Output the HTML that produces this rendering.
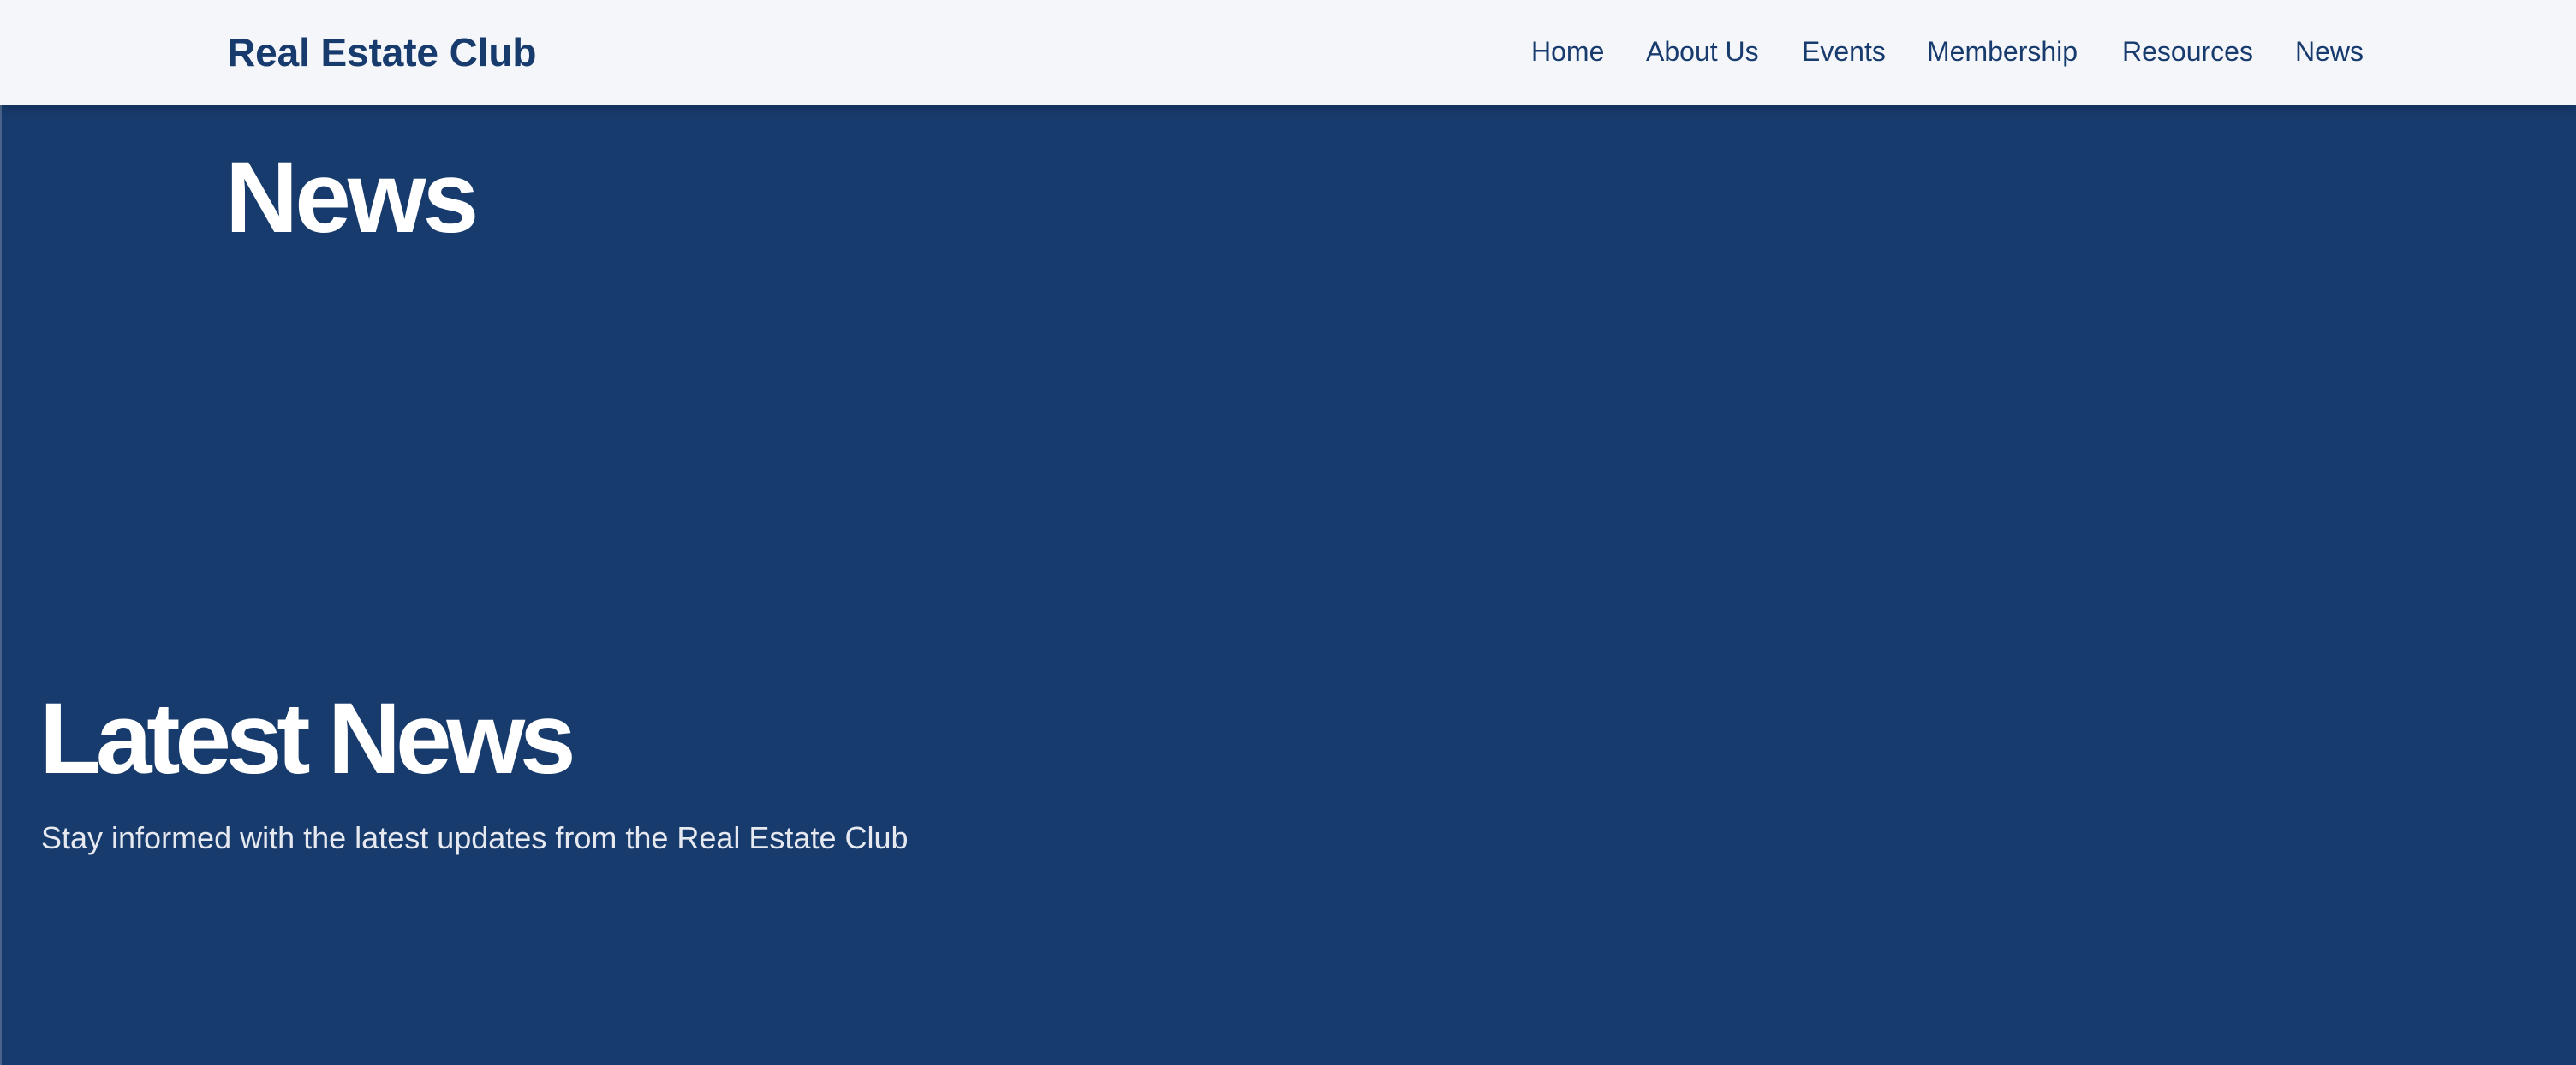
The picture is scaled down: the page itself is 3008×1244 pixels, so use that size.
<!DOCTYPE html>
<html><head><meta charset="utf-8"><style>
html,body{margin:0;padding:0;}
body{width:3008px;height:1244px;overflow:hidden;background:#183b6e;font-family:"Liberation Sans",sans-serif;position:relative;}
.leftline{position:absolute;left:0;top:0;width:2px;height:1244px;background:#4a6388;}
header{position:absolute;left:0;top:0;width:3008px;height:123px;background:#f4f6fa;box-shadow:0 4px 12px rgba(0,0,0,0.2);z-index:2;}
.logo{position:absolute;left:265px;top:34px;font-size:46px;font-weight:bold;color:#183b6e;letter-spacing:-0.1px;line-height:54px;white-space:nowrap;}
.nav a{position:absolute;top:40px;font-size:32px;color:#183b6e;text-decoration:none;line-height:40px;white-space:nowrap;}
h1,h2{margin:0;color:#fff;font-weight:bold;position:absolute;white-space:nowrap;}
h1{left:263px;top:166px;font-size:118px;line-height:130px;letter-spacing:-4px;}
h2{left:46px;top:798px;font-size:118px;line-height:130px;letter-spacing:-6.2px;}
p{position:absolute;left:48px;top:958px;margin:0;font-size:36px;line-height:42px;color:#e6e9ef;white-space:nowrap;}
</style></head><body>
<div class="leftline"></div>
<header>
<div class="logo">Real Estate Club</div>
<nav class="nav">
<a style="left:1788px">Home</a>
<a style="left:1922px">About Us</a>
<a style="left:2104px">Events</a>
<a style="left:2250px">Membership</a>
<a style="left:2478px">Resources</a>
<a style="left:2680px">News</a>
</nav>
</header>
<h1>News</h1>
<h2>Latest News</h2>
<p>Stay informed with the latest updates from the Real Estate Club</p>
</body></html>
